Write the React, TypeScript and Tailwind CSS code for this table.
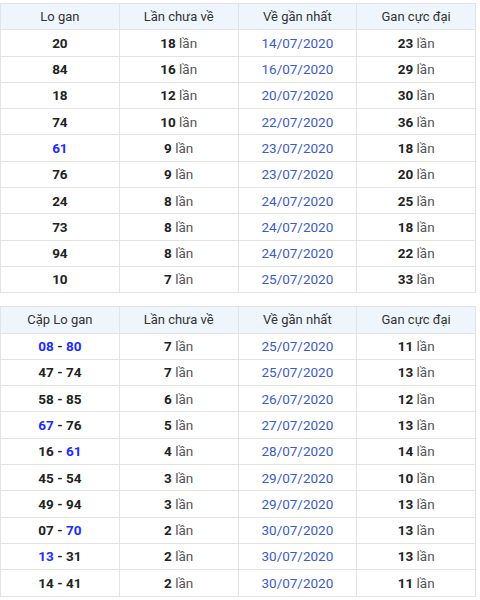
import React from "react";

type Part = { t: string; blue?: boolean };
type Row1 = { lo: Part[]; chua: string; ve: string; gan: string };

const t1: Row1[] = [
  { lo: [{ t: "20" }], chua: "18", ve: "14/07/2020", gan: "23" },
  { lo: [{ t: "84" }], chua: "16", ve: "16/07/2020", gan: "29" },
  { lo: [{ t: "18" }], chua: "12", ve: "20/07/2020", gan: "30" },
  { lo: [{ t: "74" }], chua: "10", ve: "22/07/2020", gan: "36" },
  { lo: [{ t: "61", blue: true }], chua: "9", ve: "23/07/2020", gan: "18" },
  { lo: [{ t: "76" }], chua: "9", ve: "23/07/2020", gan: "20" },
  { lo: [{ t: "24" }], chua: "8", ve: "24/07/2020", gan: "25" },
  { lo: [{ t: "73" }], chua: "8", ve: "24/07/2020", gan: "18" },
  { lo: [{ t: "94" }], chua: "8", ve: "24/07/2020", gan: "22" },
  { lo: [{ t: "10" }], chua: "7", ve: "25/07/2020", gan: "33" },
];

const t2: Row1[] = [
  { lo: [{ t: "08", blue: true }, { t: " - " }, { t: "80", blue: true }], chua: "7", ve: "25/07/2020", gan: "11" },
  { lo: [{ t: "47 - 74" }], chua: "7", ve: "25/07/2020", gan: "13" },
  { lo: [{ t: "58 - 85" }], chua: "6", ve: "26/07/2020", gan: "12" },
  { lo: [{ t: "67", blue: true }, { t: " - 76" }], chua: "5", ve: "27/07/2020", gan: "13" },
  { lo: [{ t: "16 - " }, { t: "61", blue: true }], chua: "4", ve: "28/07/2020", gan: "14" },
  { lo: [{ t: "45 - 54" }], chua: "3", ve: "29/07/2020", gan: "10" },
  { lo: [{ t: "49 - 94" }], chua: "3", ve: "29/07/2020", gan: "13" },
  { lo: [{ t: "07 - " }, { t: "70", blue: true }], chua: "2", ve: "30/07/2020", gan: "13" },
  { lo: [{ t: "13", blue: true }, { t: " - 31" }], chua: "2", ve: "30/07/2020", gan: "13" },
  { lo: [{ t: "14 - 41" }], chua: "2", ve: "30/07/2020", gan: "11" },
];

function Lan({ n }: { n: string }) {
  return (
    <>
      <span className="font-bold text-[#222]">{n}</span>
      <span className="text-[#555]"> lần</span>
    </>
  );
}

function Table({ first, rows }: { first: string; rows: Row1[] }) {
  const th = "border border-[#e3e3e3] bg-[#eef5fc] font-normal text-[#333] text-[13px] text-center p-0";
  const td = "border border-[#e3e3e3] text-center text-[13.5px] p-0";
  return (
    <table className="w-[476px] border-collapse table-fixed">
      <thead>
        <tr className="h-[26.3px]">
          <th className={th}>{first}</th>
          <th className={th}>Lần chưa về</th>
          <th className={th}>Về gần nhất</th>
          <th className={th}>Gan cực đại</th>
        </tr>
      </thead>
      <tbody>
        {rows.map((r, i) => (
          <tr key={i} className="h-[26.3px]">
            <td className={td + " font-bold text-[#222]"}>
              {r.lo.map((p, j) => (
                <span key={j} className={p.blue ? "text-[#1a2cff]" : ""}>
                  {p.t}
                </span>
              ))}
            </td>
            <td className={td}>
              <Lan n={r.chua} />
            </td>
            <td className={td + " text-[#3a5ccc]"}>{r.ve}</td>
            <td className={td}>
              <Lan n={r.gan} />
            </td>
          </tr>
        ))}
      </tbody>
    </table>
  );
}

export default function App() {
  return (
    <div className="w-[480px] h-[600px] bg-white overflow-hidden pt-[3px]" style={{ fontFamily: "Roboto, 'Noto Sans', sans-serif" }}>
      <Table first="Lo gan" rows={t1} />
      <div className="h-[13px]" />
      <Table first="Cặp Lo gan" rows={t2} />
    </div>
  );
}
